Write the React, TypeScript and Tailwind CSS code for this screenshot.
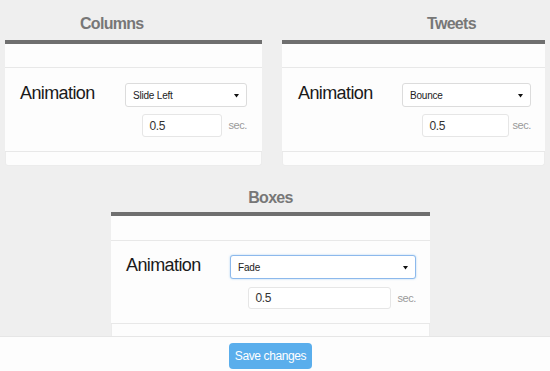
import React from "react";

function Arrow() {
  return (
    <svg width="5" height="5" viewBox="0 0 5 5" className="shrink-0">
      <path d="M0 1 L5 1 L2.5 4.5 Z" fill="#111" />
    </svg>
  );
}

type RowProps = {
  value: string;
  pl: string;
  pr: string;
  pt: string;
  labelW: string;
  selectW: string;
  selectH: string;
  inputW: string;
  inputH: string;
  inputMt: string;
  secGap: string;
  focused?: boolean;
};

function Row(p: RowProps) {
  return (
    <div className={`flex flex-col ${p.pl} ${p.pr} ${p.pt}`}>
      <div className="flex items-start">
        <div className={`${p.labelW} shrink-0 text-[18px] leading-[20px] tracking-[-0.6px] text-[#1a1a1a]`}>
          Animation
        </div>
        <div
          className={`${p.selectW} ${p.selectH} flex items-center justify-between rounded-[3px] bg-white pl-[7px] pr-[7px] ${
            p.focused
              ? "border border-[#8db9ec] shadow-[0_0_2px_rgba(102,175,233,0.6)]"
              : "border border-[#dcdcdc]"
          }`}
        >
          <span className="text-[10px] tracking-[-0.2px] text-[#222]">{p.value}</span>
          <Arrow />
        </div>
      </div>
      <div className={`flex items-center justify-end ${p.inputMt}`}>
        <div
          className={`${p.inputW} ${p.inputH} flex items-center rounded-[3px] border border-[#e6e6e6] bg-white pl-[6px] text-[12px] tracking-[-0.3px] text-[#333]`}
        >
          0.5
        </div>
        <span className={`${p.secGap} text-[11px] tracking-[-0.4px] text-[#9a9a9a]`}>sec.</span>
      </div>
    </div>
  );
}

export default function App() {
  return (
    <div className="flex h-[371px] w-[550px] flex-col overflow-hidden bg-[#efefef] font-['Liberation_Sans',Arial,sans-serif]">
      <div className="h-[336px] overflow-hidden">
        <div className="flex pl-[5px]">
          {/* Columns */}
          <div className="flex w-[257px] flex-col">
            <div className="h-[40px] pl-[75px] pt-[15px] text-[16px] font-bold leading-[18px] tracking-[-0.7px] text-[#777]">
              Columns
            </div>
            <div className="h-[4px] bg-[#6f6f6f]" />
            <div className="h-[23px] bg-[#fdfdfd]" />
            <div className="h-[85px] border-y border-[#e8e8e8] bg-[#fdfdfd]">
              <Row
                value="Slide Left"
                pl="pl-[15px]"
                pr="pr-[15px]"
                pt="pt-[15px]"
                labelW="w-[105px]"
                selectW="w-[122px]"
                selectH="h-[24px]"
                inputW="w-[80px]"
                inputH="h-[23px]"
                inputMt="mt-[7px]"
                secGap="ml-[6px]"
              />
            </div>
            <div className="h-[14px] rounded-b-[3px] border-x border-b border-[#ececec] bg-[#fdfdfd]" />
          </div>

          {/* Tweets */}
          <div className="ml-[20px] flex w-[263px] flex-col">
            <div className="h-[40px] pl-[145px] pt-[15px] text-[16px] font-bold leading-[18px] tracking-[-0.7px] text-[#777]">
              Tweets
            </div>
            <div className="h-[4px] bg-[#6f6f6f]" />
            <div className="h-[23px] bg-[#fdfdfd]" />
            <div className="h-[85px] border-y border-[#e8e8e8] bg-[#fdfdfd]">
              <Row
                value="Bounce"
                pl="pl-[16px]"
                pr="pr-[14px]"
                pt="pt-[15px]"
                labelW="w-[104px]"
                selectW="w-[129px]"
                selectH="h-[24px]"
                inputW="w-[87px]"
                inputH="h-[23px]"
                inputMt="mt-[7px]"
                secGap="ml-[3px]"
              />
            </div>
            <div className="h-[14px] rounded-b-[3px] border-x border-b border-[#ececec] bg-[#fdfdfd]" />
          </div>
        </div>

        {/* Boxes */}
        <div className="ml-[111px] flex w-[319px] flex-col">
          <div className="h-[46px] pt-[23px] text-center text-[16px] font-bold leading-[18px] tracking-[-0.7px] text-[#777]">
            Boxes
          </div>
          <div className="h-[4px] bg-[#6f6f6f]" />
          <div className="h-[24px] bg-[#fdfdfd]" />
          <div className="h-[84px] border-y border-[#e8e8e8] bg-[#fdfdfd]">
            <Row
              value="Fade"
              pl="pl-[15px]"
              pr="pr-[14px]"
              pt="pt-[14px]"
              labelW="w-[104px]"
              selectW="w-[186px]"
              selectH="h-[24px]"
              inputW="w-[143px]"
              inputH="h-[22px]"
              inputMt="mt-[8px]"
              secGap="ml-[6px]"
              focused
            />
          </div>
          <div className="h-[14px] border-x border-[#ececec] bg-[#fdfdfd]" />
        </div>
      </div>

      {/* Footer */}
      <div className="h-[35px] border-t border-[#e6e6e6] bg-[#fdfdfd] pl-[229px] pt-[6px]">
        <button className="flex h-[26px] w-[83px] items-center justify-center rounded-[4px] bg-[#5aaeec] text-[12px] tracking-[-0.4px] text-white">
          Save changes
        </button>
      </div>
    </div>
  );
}
